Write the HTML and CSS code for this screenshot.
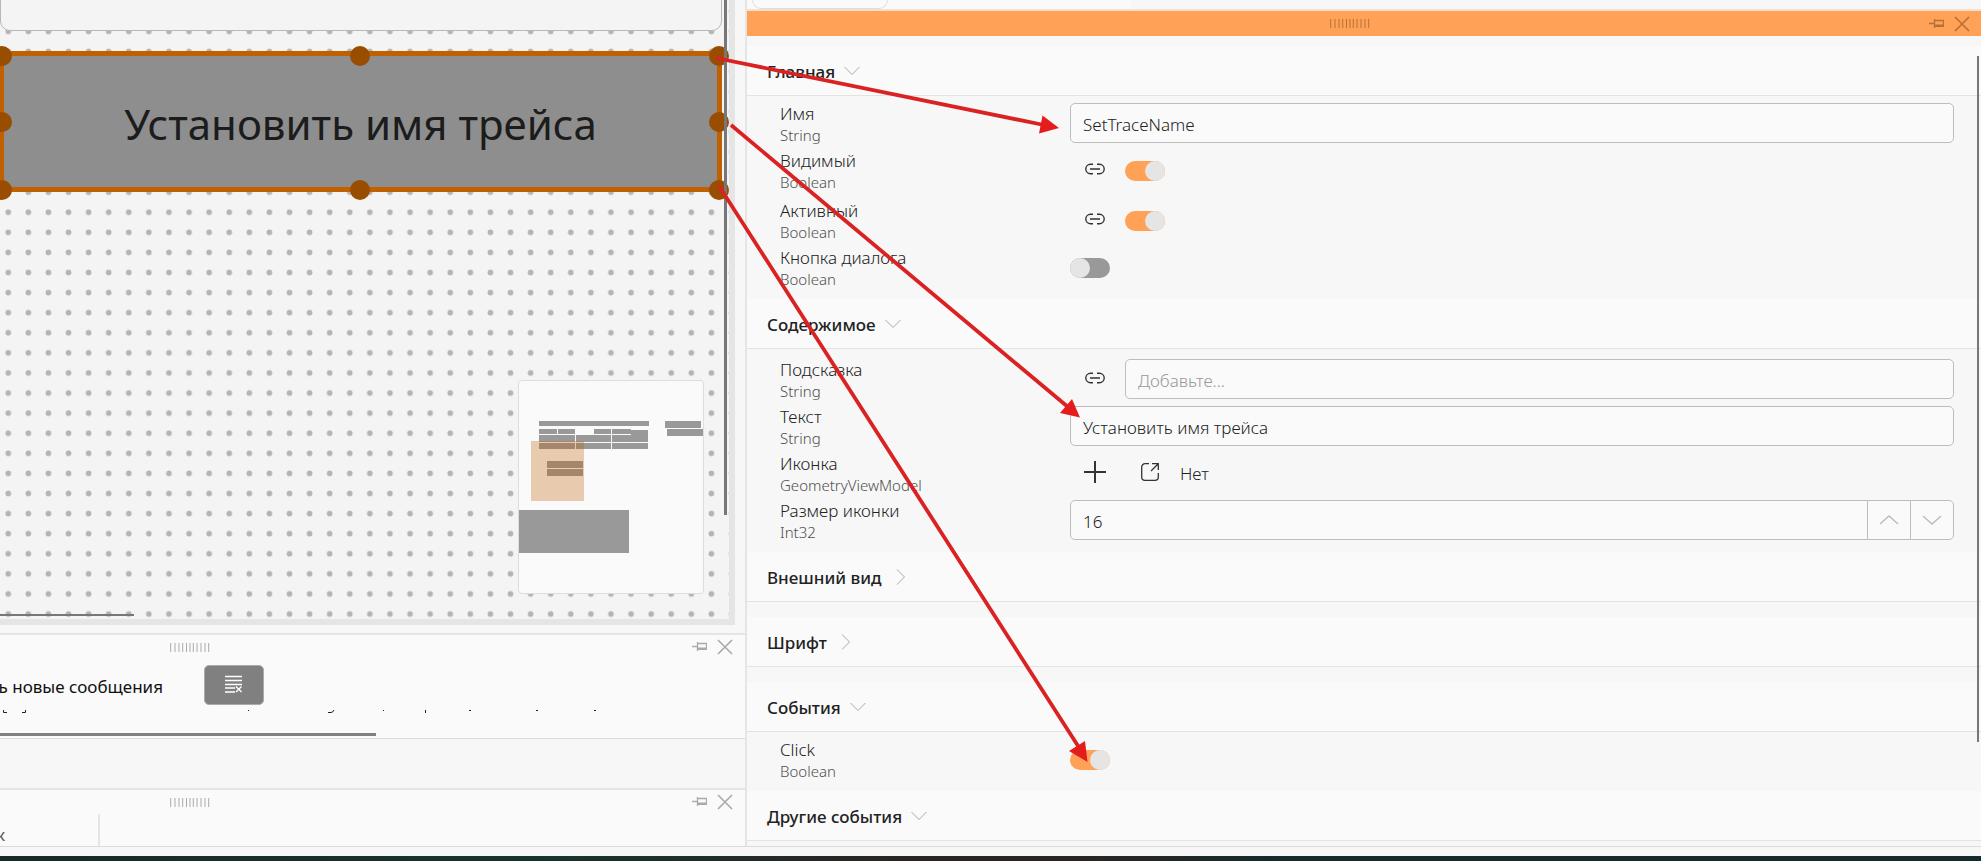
FILE: index.html
```html
<!DOCTYPE html>
<html lang="ru">
<head>
<meta charset="utf-8">
<title>Редактор форм</title>
<link rel="stylesheet" href="styles.css">
</head>
<body>
<svg class="sprite" aria-hidden="true">
  <symbol id="grip" viewBox="0 0 40 9"><path d="M.7 0v9M5 0v9M9 0v9M12.7 0v9M16.5 0v9M20 0v9M23.3 0v9M27 0v9M31 0v9M35 0v9M38.7 0v9" stroke="currentColor" fill="none"/></symbol>
  <symbol id="pin" viewBox="0 0 16 12"><path d="M1 5.500h6M6.500 1v9M6.500 2.500h9v6" stroke="currentColor" stroke-width="1.300" fill="none"/><path d="M6 6.500h10V9H6z" fill="currentColor"/></symbol>
  <symbol id="close" viewBox="0 0 16 16"><path d="M1 1l14 14M15 1L1 15" stroke="currentColor" stroke-width="1.600" fill="none"/></symbol>
  <symbol id="down" viewBox="0 0 16 16"><path d="M.5 4L8 11.500 15.500 4" stroke="currentColor" fill="none"/></symbol>
  <symbol id="right" viewBox="0 0 16 16"><path d="M4 .5L11.500 8 4 15.500" stroke="currentColor" fill="none"/></symbol>
  <symbol id="link" viewBox="0 0 20 12"><path d="M8 1.300H5.500a4.700 4.700 0 0 0 0 9.400H8M12 1.300h2.500a4.700 4.700 0 0 1 0 9.400H12M5 6h10" stroke="currentColor" stroke-width="1.400" fill="none"/></symbol>
</svg>

<main class="workspace">
  <div class="left">
    <section class="canvas">
      <svg class="dots" aria-hidden="true"><defs><pattern id="dot" width="20.090" height="20.090" x="-1.800" y="1.300" patternUnits="userSpaceOnUse"><circle cx="10.045" cy="10.045" r="2.800" fill="#b4b4b4"/></pattern></defs><rect width="100%" height="100%" fill="url(#dot)"/></svg>
      <div class="upper-widget"></div>
      <button class="widget" type="button">Установить имя трейса
        <span class="handle top start"></span><span class="handle top mid"></span><span class="handle top end"></span>
        <span class="handle center start"></span><span class="handle center end"></span>
        <span class="handle bottom start"></span><span class="handle bottom mid"></span><span class="handle bottom end"></span>
      </button>
      <div class="minimap">
        <svg viewBox="0 0 184 212" aria-hidden="true">
          <g fill="#999">
            <path d="M20 40h110v5H20zM20 48h18v5H20zM39 48h17v5H39zM75 48h17v5H75zM93 48h19v5H93zM112 49h17v5h-17zM20 54h36v7H20zM57 54h35v7H57zM93 54h36v7H93zM20 62h36v6H20zM57 62h35v6H57zM93 62h36v6H93zM146 40h36v7h-36zM148 48h36v7h-36zM28 80h36v7H28zM28 88h36v7H28zM0 129h110v43H0z"/>
          </g>
          <path d="M12 60h53v60H12z" fill="#c06000" fill-opacity=".3"/>
        </svg>
      </div>
      <div class="scroll-v"></div>
      <div class="scroll-h"></div>
    </section>

    <section class="panel messages">
      <header class="dock"><svg class="grip"><use href="#grip"/></svg><span class="tools"><button type="button" aria-label="Закрепить"><svg class="pin"><use href="#pin"/></svg></button><button type="button" aria-label="Закрыть"><svg class="close"><use href="#close"/></svg></button></span></header>
      <div class="message-bar">
        <div class="message-label"><span>ть новые сообщения</span></div>
        <button class="clear" type="button" aria-label="Очистить">
          <svg viewBox="0 0 18 18"><path d="M0 1.500h17M0 5.500h17M0 9.500h17M0 13h10M0 17h10M11 11.500l5.500 5.500M16.500 11.500L11 17" stroke="#fff" stroke-width="1.400" fill="none"/></svg>
        </button>
      </div>
      <svg class="log" aria-hidden="true"><path d="M3.500 0v2.500H7M25.500 0v2.500H22M248.500 0v1M328 2.500h3q2 0 3-2.500M383.500 0v1M425.500 0v3M469 .5h2M536 .5h2M594 .5h2" stroke="#222" fill="none"/></svg>
      <div class="log-scroll"></div>
    </section>
    <div class="spacer"></div>
    <section class="panel table-panel">
      <header class="dock"><svg class="grip"><use href="#grip"/></svg><span class="tools"><button type="button" aria-label="Закрепить"><svg class="pin"><use href="#pin"/></svg></button><button type="button" aria-label="Закрыть"><svg class="close"><use href="#close"/></svg></button></span></header>
      <div class="column-head"><span>к</span></div>
    </section>
  </div>
  <div class="splitter"></div>
  <aside class="right">
    <div class="tabs"><div class="tab-area"><div class="tab"></div></div></div>
    <header class="props-dock"><svg class="grip"><use href="#grip"/></svg><span class="tools"><button type="button" aria-label="Закрепить"><svg class="pin"><use href="#pin"/></svg></button><button type="button" aria-label="Закрыть"><svg class="close"><use href="#close"/></svg></button></span></header>

    <div class="props">
      <section class="group">
        <button class="title" type="button" aria-expanded="true"><span>Главная</span><svg><use href="#down"/></svg></button>
        <div class="rows main-rows">
          <div class="row"><label for="name"><b>Имя</b><small>String</small></label><div class="value"><input class="field" id="name" value="SetTraceName"></div></div>
          <div class="row"><label for="visible"><b>Видимый</b><small>Boolean</small></label><div class="value"><button class="icon" type="button" aria-label="Привязка"><svg class="link"><use href="#link"/></svg></button><input class="toggle" id="visible" type="checkbox" checked></div></div>
          <div class="row spaced"><label for="active"><b>Активный</b><small>Boolean</small></label><div class="value"><button class="icon" type="button" aria-label="Привязка"><svg class="link"><use href="#link"/></svg></button><input class="toggle" id="active" type="checkbox" checked></div></div>
          <div class="row"><label for="dialog"><b>Кнопка диалога</b><small>Boolean</small></label><div class="value"><input class="toggle" id="dialog" type="checkbox"></div></div>
        </div>
      </section>
      <section class="group">
        <button class="title" type="button" aria-expanded="true"><span>Содержимое</span><svg><use href="#down"/></svg></button>
        <div class="rows content-rows">
          <div class="row"><label for="hint"><b>Подсказка</b><small>String</small></label><div class="value"><button class="icon" type="button" aria-label="Привязка"><svg class="link"><use href="#link"/></svg></button><input class="field" id="hint" placeholder="Добавьте..."></div></div>
          <div class="row"><label for="text"><b>Текст</b><small>String</small></label><div class="value"><input class="field" id="text" value="Установить имя трейса"></div></div>
          <div class="row"><div class="label"><b>Иконка</b><small>GeometryViewModel</small></div><div class="value">
            <button class="icon" type="button" aria-label="Добавить"><svg class="plus" viewBox="0 0 22 22"><path d="M11 0v22M0 11h22" stroke="currentColor" stroke-width="2"/></svg></button>
            <button class="icon" type="button" aria-label="Открыть"><svg class="open" viewBox="0 0 18 18"><path d="M8 .7H4A3.300 3.300 0 0 0 .7 4v10A3.300 3.300 0 0 0 4 17.300h10a3.300 3.300 0 0 0 3.300-3.300v-4M11 .7h6.300V7M17 1l-7 7" stroke="currentColor" stroke-width="1.300" fill="none"/></svg></button>
            <span class="none">Нет</span></div></div>
          <div class="row"><label for="size"><b>Размер иконки</b><small>Int32</small></label><div class="value"><div class="spinner"><input id="size" value="16"><button type="button" aria-label="Больше"><svg viewBox="0 0 20 12"><path d="M1 10l9-8 9 8" stroke="currentColor" stroke-width="1.400" fill="none"/></svg></button><button type="button" aria-label="Меньше"><svg viewBox="0 0 20 12"><path d="M1 2l9 8 9-8" stroke="currentColor" stroke-width="1.400" fill="none"/></svg></button></div></div></div>
        </div>
      </section>
      <section class="group collapsed"><button class="title" type="button" aria-expanded="false"><span>Внешний вид</span><svg><use href="#right"/></svg></button></section>
      <section class="group collapsed"><button class="title" type="button" aria-expanded="false"><span>Шрифт</span><svg><use href="#right"/></svg></button></section>
      <section class="group">
        <button class="title" type="button" aria-expanded="true"><span>События</span><svg><use href="#down"/></svg></button>
        <div class="rows event-rows">
          <div class="row"><label for="click"><b>Click</b><small>Boolean</small></label><div class="value"><input class="toggle" id="click" type="checkbox" checked></div></div>
        </div>
      </section>
      <section class="group"><button class="title" type="button" aria-expanded="true"><span>Другие события</span><svg><use href="#down"/></svg></button></section>
      <div class="props-scroll"></div>
    </div>
  </aside>

  <svg class="arrows" aria-hidden="true">
    <path d="M716 58L1044 125M731 125L1068 407M719 186L1080 749" stroke="#db2222" stroke-width="3.800" fill="none"/>
    <path d="M1059 128l-16.500-12.500-3.500 18zM1080 417.500l-8-18.500-12 14zM1087.500 762l-2.500-21-16 10z" fill="#e51c1c"/>
  </svg>
</main>
<footer class="status"></footer>
<div class="desktop"></div>
</body>
</html>
```

FILE: styles.css
```css
* { box-sizing: border-box; }

body {
  margin: 0;
  height: 100vh;
  display: flex;
  flex-direction: column;
  overflow: hidden;
  background: #f7f7f7;
  color: #222;
  font: 17px/24px "Noto Sans", "Open Sans", sans-serif;
}

button { font: inherit; color: inherit; background: none; border: 0; padding: 0; }
input { font: inherit; color: inherit; }
svg { display: block; flex: none; }
.sprite { position: absolute; width: 0; height: 0; }

.workspace {
  position: relative;
  flex: 1;
  min-height: 0;
  display: grid;
  grid-template-columns: 745fr 2px 1234fr;
}
.status { height: 10px; border-top: 1px solid #dcdcdc; background: #f7f7f7; }
.desktop { height: 5px; background: linear-gradient(90deg, #162a28, #18342e 28%, #2a2522 45%, #2a2522 55%, #142b2e 65%, #152a2d); }
.splitter { background: #e5e5e5; }

.left { display: flex; flex-direction: column; min-width: 0; min-height: 0; }

/* design surface */
.canvas {
  position: relative;
  flex: 1;
  margin: 0 10px 8px 0;
  overflow: hidden;
  border: solid #e5e5e5;
  border-width: 0 6px 6px 0;
  background: #f4f4f4;
}
.dots { position: absolute; inset: 0; width: 100%; height: 100%; }
.upper-widget {
  position: absolute;
  left: 0;
  top: -40px;
  width: 722px;
  height: 71px;
  border: 1px solid #b8b8b8;
  border-radius: 10px;
  background: #f4f4f4;
}
.widget {
  position: absolute;
  left: -1px;
  top: 51px;
  width: 723px;
  height: 141px;
  padding-top: 5px;
  border: 5px solid #c06000;
  background: #8e8e8e;
  color: #1c1c1c;
  font-size: 42px;
  line-height: 60px;
  font-weight: 400;
  white-space: nowrap;
}
.handle { position: absolute; width: 20px; height: 20px; border-radius: 50%; background: #994d00; }
.handle.top { top: -10px; }
.handle.center { top: calc(50% - 10px); }
.handle.bottom { bottom: -13px; }
.handle.start { left: -12px; }
.handle.mid { left: calc(50% - 11px); }
.handle.end { right: -12px; }
.minimap {
  position: absolute;
  right: 25px;
  bottom: 25px;
  width: 186px;
  height: 214px;
  border: 1px solid #ddd;
  border-radius: 4px;
  overflow: hidden;
  background: #fafafa;
}
.scroll-v { position: absolute; right: 2px; top: 0; width: 3px; height: 515px; background: #777; }
.scroll-h { position: absolute; left: 0; bottom: 3px; width: 134px; height: 2px; background: #777; }

/* docked panels */
.panel { background: #fafafa; border-top: 2px solid #e5e5e5; }
.messages { height: 106px; border-bottom: 1px solid #dcdcdc; overflow: hidden; }
.spacer { height: 49px; }
.table-panel { height: 58px; }
.dock { position: relative; height: 24px; padding: 0 12px 0 170px; display: flex; align-items: center; color: #aaa; }
.grip { width: 40px; height: 9px; }
.pin { width: 16px; height: 12px; }
.close { width: 16px; height: 16px; }
.tools { margin-left: auto; display: flex; align-items: center; gap: 10px; }

.message-bar { display: flex; gap: 41px; padding-top: 6px; height: 51px; }
.message-label { width: 163px; height: 40px; padding-top: 3px; display: flex; align-items: center; justify-content: flex-end; overflow: hidden; white-space: nowrap; color: #111; }
.clear { width: 60px; height: 40px; padding-bottom: 2px; display: grid; place-items: center; background: #808080; border: 1px solid #aaa; border-radius: 5px; }
.clear svg { width: 18px; height: 18px; }
.log { width: 100%; height: 3px; }
.log-scroll { width: 376px; height: 3px; margin-top: 20px; background: #808080; }
.column-head { width: 100px; height: 32px; padding-top: 9px; border-right: 2px solid #e5e5e5; color: #555; }
.column-head span { display: block; text-indent: -4px; overflow: hidden; line-height: 23px; }

/* property grid */
.right { display: flex; flex-direction: column; min-width: 0; min-height: 0; }
.tabs { height: 11px; border-bottom: 2px solid #eee0d6; }
.tab-area { width: 384px; height: 9px; padding-left: 5px; background: #fafafa; }
.tab { width: 136px; height: 9px; border: 1px solid #ddd; border-top: 0; border-radius: 0 0 9px 9px; }
.props-dock { height: 25px; padding: 0 11px 0 583px; display: flex; align-items: center; background: #ffa258; color: #b57037; }
.props { position: relative; flex: 1; min-height: 0; padding-top: 10px; }
.title {
  display: flex;
  align-items: center;
  gap: 9px;
  width: 100%;
  height: 50px;
  padding-left: 20px;
  border-bottom: 1px solid #e3e3e3;
  background: #fafafa;
  font-weight: 500;
}
.title span { padding-top: 2px; }
.title svg { width: 16px; height: 16px; color: #a8a8a8; }
.collapsed { padding-bottom: 15px; }
.collapsed .title { gap: 11px; }
.main-rows { padding: 5px 0 7px; }
.content-rows { padding: 8px 0 7px; }
.event-rows { padding: 5px 0 7px; }
.row { display: grid; grid-template-columns: 290px 1fr; height: 47px; padding: 0 27px 0 33px; }
.spaced { margin-top: 3px; }
.row label, .label { display: flex; flex-direction: column; padding-top: 1px; }
.row b { font-weight: 300; line-height: 24px; }
.row small { font-size: 15px; font-weight: 300; line-height: 18px; color: #505050; }
.value { display: flex; align-items: center; gap: 5px; height: 44px; font-weight: 300; }
.icon { width: 50px; height: 40px; padding-bottom: 2px; flex: none; display: grid; place-items: center; color: #333; }
.link { width: 20px; height: 12px; }
.plus { width: 22px; height: 22px; }
.open { width: 18px; height: 18px; }
.field, .spinner { flex: 1; min-width: 0; width: 100%; height: 40px; border: 1px solid #bdbdbd; border-radius: 5px; background: #fafafa; }
.field { padding: 2px 12px 0; }
.field::placeholder { color: #999; opacity: 1; }
.spinner { display: flex; overflow: hidden; }
.spinner input { flex: 1; min-width: 0; border: 0; background: none; padding: 3px 12px 0; }
.spinner button { width: 43px; display: grid; place-items: center; border-left: 1px solid #bdbdbd; color: #bbb; }
.spinner svg { width: 20px; height: 12px; }
.toggle {
  appearance: none;
  display: flex;
  width: 40px;
  height: 20px;
  margin: 2px 0 0;
  border-radius: 10px;
  background: #999;
}
.toggle::before { content: ""; width: 20px; height: 20px; border-radius: 50%; background: #e5e5e5; }
.toggle:checked { background: #ffa258; justify-content: flex-end; }
.none { padding: 2px 0 0 0; }
.props-scroll { position: absolute; top: 20px; right: 2px; width: 2px; height: 686px; background: #777; }

.arrows { position: absolute; left: 0; top: 0; width: 100%; height: 100%; pointer-events: none; }
```
